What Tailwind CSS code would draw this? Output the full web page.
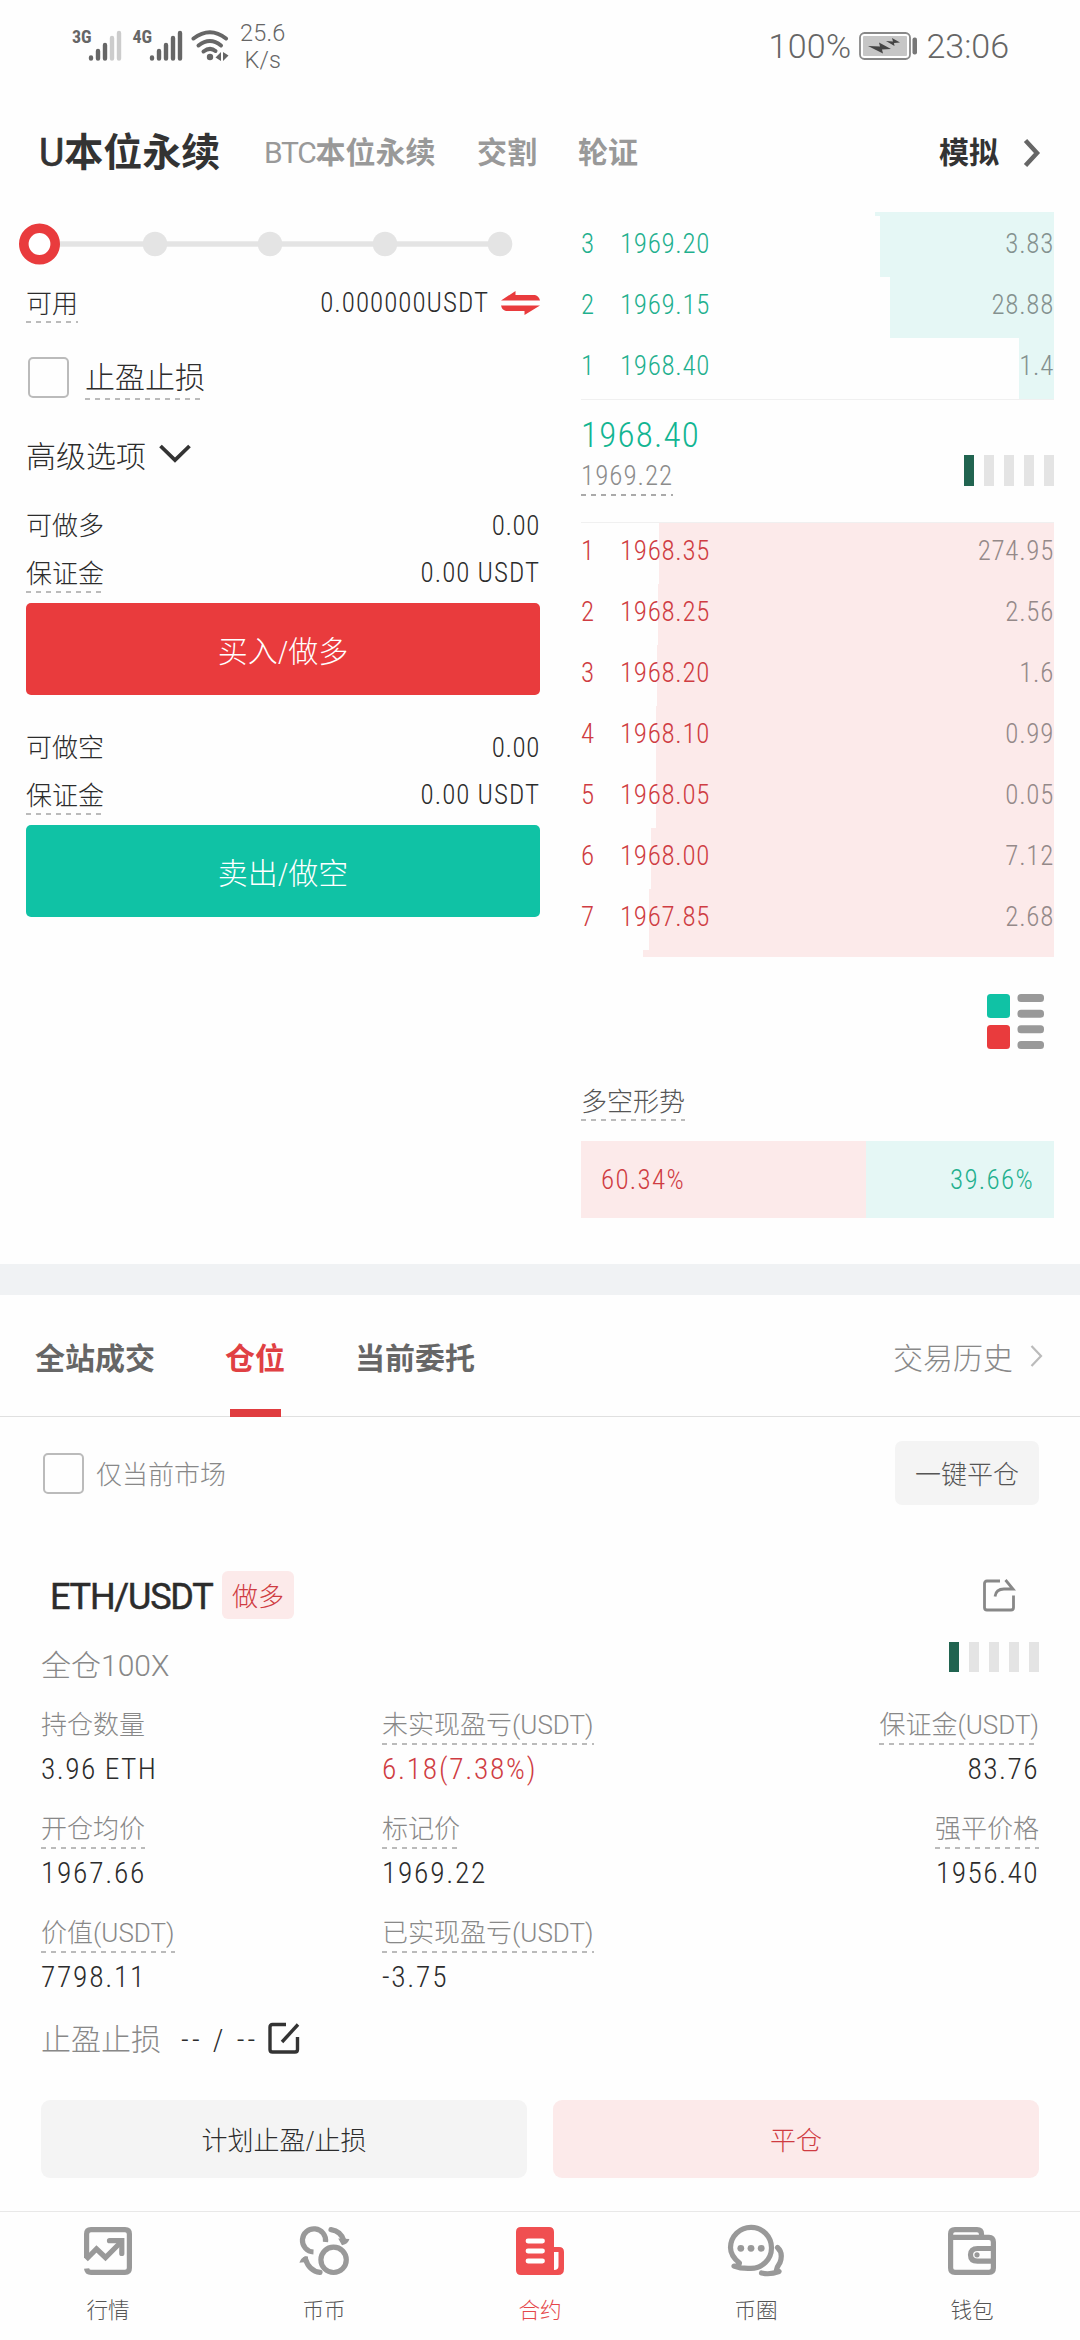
<!DOCTYPE html>
<html lang="zh-CN">
<head>
<meta charset="utf-8">
<title>合约</title>
<script src="https://cdn.jsdelivr.net/npm/@tailwindcss/browser@4"></script>
</head>
<body class="bg-white">
<div class="w-[1080px] h-[2340px] overflow-hidden flex flex-col bg-[#fefefe] text-[#2c2c2c] font-light whitespace-nowrap font-['Roboto_Condensed','Roboto','Noto_Sans_CJK_SC',sans-serif]">

  <!-- status bar -->
  <header class="h-[92px] shrink-0 flex items-center justify-between pl-[72px] pr-[71px] text-[#666] font-['Roboto',sans-serif]">
    <div class="flex items-center">
      <svg class="w-[160px] h-[40px]" viewBox="0 0 160 40">
        <g fill="#666" font-family="Roboto Condensed" font-weight="700" font-size="18"><text x="0" y="17">3G</text><text x="60.500" y="17">4G</text></g>
        <g stroke="#666" stroke-width="4.400" stroke-linecap="round">
          <path d="M19 31.500v1M26 25v7.500M33 19v13.500"/><path d="M40 12v20.500M47 7v25.500" stroke="#ccc"/>
          <path d="M80 31.500v1M87 25v7.500M94 19v13.500M101 12v20.500M108 7v25.500"/>
        </g>
        <g fill="none" stroke="#666" stroke-width="4" stroke-linecap="round"><path d="M121.500 12.500Q138 0 154 12.500"/><path d="M126.500 19.500Q138 10.500 149 19.500"/><path d="M131.500 25.500Q138 20.500 143.500 25"/></g>
        <circle cx="138" cy="31" r="3.200" fill="#666"/>
        <path d="M149 26v9l-5.500-3.500zM151 26v9l5.500-5.500z" fill="#666"/>
      </svg>
      <div class="ml-[8px] mt-px text-[23.5px] leading-[27px] text-center tracking-[0.2px]"><div>25.6</div><div>K/s</div></div>
    </div>
    <div class="flex items-center text-[34px] leading-10 font-[350]">
      <span class="tracking-[0.3px]">100%</span>
      <svg class="ml-[8px] mr-[7px] w-[60px] h-[28px]" viewBox="0 0 60 28">
        <rect x="1" y="1" width="50" height="26" rx="4.500" fill="#fff" stroke="#888" stroke-width="1.800"/>
        <rect x="4" y="4" width="44" height="20" rx="1" fill="#c6c6c6"/>
        <path d="M9 14l12 .500-1-4 12 6.500-9 .500 1 4z" fill="#444"/><path d="M27 9l7 .500-1-3.500 8 4.500-6 .500 .500 3z" fill="#444"/>
        <rect x="53.500" y="5.500" width="4.500" height="17" rx="2" fill="#777"/>
      </svg>
      <span>23:06</span>
    </div>
  </header>

  <!-- market tabs -->
  <nav class="h-[120px] shrink-0 flex items-center pt-[2px] pl-[39px] pr-[39px] text-[30px] leading-10 text-[#999] font-bold">
    <span class="text-[39px] text-[#333] w-[225px]"><span class="font-['Roboto'] font-normal [-webkit-text-stroke:0.7px_#333]">U</span>本位永续</span>
    <span class="w-[213px]"><span class="font-['Roboto'] font-normal tracking-[-1.3px]">BTC</span>本位永续</span>
    <span class="w-[101px]">交割</span>
    <span>轮证</span>
    <span class="ml-auto text-[#333]">模拟</span>
    <svg class="ml-[24px] w-[18px] h-[30px]" viewBox="0 0 18 30"><path d="M2.500 2.500L14 15 2.500 27.500" fill="none" stroke="#666" stroke-width="4.500"/></svg>
  </nav>

  <!-- order form and order book -->
  <main class="h-[1052px] shrink-0 flex justify-between pr-[26px]">
    <section class="w-[540px] pl-[26px] text-[26px]">
      <div class="h-[64px] -ml-[26px]">
        <svg class="w-[540px] h-[64px]" viewBox="0 0 540 64">
          <path d="M40 32H500" stroke="#e4e4e4" stroke-width="5.500"/>
          <g fill="#e4e4e4"><circle cx="155" cy="32" r="12.300"/><circle cx="270" cy="32" r="12.300"/><circle cx="385" cy="32" r="12.300"/><circle cx="500" cy="32" r="12.300"/></g>
          <circle cx="39.500" cy="32" r="15.700" fill="#fff" stroke="#e93b3d" stroke-width="9.600"/>
        </svg>
      </div>
      <div class="h-[54px] flex items-center justify-between">
        <span class="h-10 leading-[42px] bg-[linear-gradient(to_right,#bbb_50%,transparent_50%)] bg-[length:10px_2px] bg-repeat-x bg-[position:0_100%]">可用</span>
        <span class="flex items-center text-[27px]"><span class="tracking-[1px]">0.000000USDT</span>
          <svg class="ml-[12px] w-[39px] h-[24px]" viewBox="0 0 39 24" fill="#e93b3d"><path d="M0 9.500L14.500 0v4H34q4 1 5 5.500z"/><path d="M39 14.500L23.500 24v-4H5q-4-1-5-5.500z"/></svg>
        </span>
      </div>
      <div class="h-[94px] flex items-center pl-[2px]">
        <span class="size-[41px] rounded-[5px] border-[2.500px] border-[#bbb]"></span>
        <span class="ml-[16px] text-[30px] h-[46px] leading-[48px] bg-[linear-gradient(to_right,#bbb_50%,transparent_50%)] bg-[length:10px_2px] bg-repeat-x bg-[position:0_100%]">止盈止损</span>
      </div>
      <div class="h-[62px] pt-[2px] flex items-center text-[30px]">高级选项
        <svg class="ml-[13px] -mt-[6px] w-[32px] h-[19px]" viewBox="0 0 32 19"><path d="M1.500 2L16 16 30.500 2" fill="none" stroke="#333" stroke-width="3.800"/></svg>
      </div>
      <div class="mt-3 h-[54px] pt-[2px] flex items-center justify-between"><span>可做多</span><span class="text-[27px] tracking-[0.6px]">0.00</span></div>
      <div class="h-[42px] flex items-center justify-between"><span class="h-10 leading-[42px] bg-[linear-gradient(to_right,#bbb_50%,transparent_50%)] bg-[length:10px_2px] bg-repeat-x bg-[position:0_100%]">保证金</span><span class="text-[27px] tracking-[1px] leading-[42px]">0.00 USDT</span></div>
      <button class="mt-[9px] w-full h-[92px] rounded-[5px] bg-[#e93b3d] text-white text-[30px] pt-[5px]">买入/做多</button>
      <div class="mt-[25px] h-[54px] pt-[2px] flex items-center justify-between"><span>可做空</span><span class="text-[27px] tracking-[0.6px]">0.00</span></div>
      <div class="h-[42px] flex items-center justify-between"><span class="h-10 leading-[42px] bg-[linear-gradient(to_right,#bbb_50%,transparent_50%)] bg-[length:10px_2px] bg-repeat-x bg-[position:0_100%]">保证金</span><span class="text-[27px] tracking-[1px] leading-[42px]">0.00 USDT</span></div>
      <button class="mt-[9px] w-full h-[92px] rounded-[5px] bg-[#10c2a5] text-white text-[30px] pt-[5px]">卖出/做空</button>
    </section>

    <section class="w-[473px] text-[27px] tracking-[0.7px]">
      <div class="text-[#1fb08e]">
        <div class="h-[4px] ml-auto bg-[#e5f7f5]" style="width:179px"></div>
        <div class="h-[61px] pb-[4px] flex items-center bg-no-repeat bg-right bg-[linear-gradient(#e5f7f5,#e5f7f5)]" style="background-size:174px 100%"><span class="w-[39px]">3</span><span>1969.20</span><span class="ml-auto text-[#84918f]">3.83</span></div>
        <div class="h-[61px] pb-[4px] flex items-center bg-no-repeat bg-right bg-[linear-gradient(#e5f7f5,#e5f7f5)]" style="background-size:164px 100%"><span class="w-[39px]">2</span><span>1969.15</span><span class="ml-auto text-[#84918f]">28.88</span></div>
        <div class="h-[61px] pb-[4px] flex items-center bg-no-repeat bg-right bg-[linear-gradient(#e5f7f5,#e5f7f5)]" style="background-size:35px 100%"><span class="w-[39px]">1</span><span>1968.40</span><span class="ml-auto text-[#84918f]">1.4</span></div>
      </div>
      <div class="h-[124px] border-y border-[#f0f0f0] flex justify-between">
        <div class="pt-[12px] flex flex-col items-start">
          <div class="h-[44px] leading-[47px] text-[35px] tracking-[1.2px] text-[#12b592]">1968.40</div>
          <div class="h-10 leading-[41px] tracking-[1px] text-[#8c8c8c] bg-[linear-gradient(to_right,#aaa_50%,transparent_50%)] bg-[length:10px_2px] bg-repeat-x bg-[position:0_100%]">1969.22</div>
        </div>
        <div class="mt-[55px] h-[31px] flex gap-[10px]"><i class="w-[10px] bg-[#216450]"></i><i class="w-[10px] bg-[#e4e4e4]"></i><i class="w-[10px] bg-[#e4e4e4]"></i><i class="w-[10px] bg-[#e4e4e4]"></i><i class="w-[10px] bg-[#e4e4e4]"></i></div>
      </div>
      <div class="text-[#cf3c42]">
        <div class="h-[61px] pb-[4px] flex items-center bg-no-repeat bg-right bg-[linear-gradient(#fceaea,#fceaea)]" style="background-size:395px 100%"><span class="w-[39px]">1</span><span>1968.35</span><span class="ml-auto text-[#948989]">274.95</span></div>
        <div class="h-[61px] pb-[4px] flex items-center bg-no-repeat bg-right bg-[linear-gradient(#fceaea,#fceaea)]" style="background-size:396px 100%"><span class="w-[39px]">2</span><span>1968.25</span><span class="ml-auto text-[#948989]">2.56</span></div>
        <div class="h-[61px] pb-[4px] flex items-center bg-no-repeat bg-right bg-[linear-gradient(#fceaea,#fceaea)]" style="background-size:397px 100%"><span class="w-[39px]">3</span><span>1968.20</span><span class="ml-auto text-[#948989]">1.6</span></div>
        <div class="h-[61px] pb-[4px] flex items-center bg-no-repeat bg-right bg-[linear-gradient(#fceaea,#fceaea)]" style="background-size:398px 100%"><span class="w-[39px]">4</span><span>1968.10</span><span class="ml-auto text-[#948989]">0.99</span></div>
        <div class="h-[61px] pb-[4px] flex items-center bg-no-repeat bg-right bg-[linear-gradient(#fceaea,#fceaea)]" style="background-size:398px 100%"><span class="w-[39px]">5</span><span>1968.05</span><span class="ml-auto text-[#948989]">0.05</span></div>
        <div class="h-[61px] pb-[4px] flex items-center bg-no-repeat bg-right bg-[linear-gradient(#fceaea,#fceaea)]" style="background-size:403px 100%"><span class="w-[39px]">6</span><span>1968.00</span><span class="ml-auto text-[#948989]">7.12</span></div>
        <div class="h-[61px] pb-[4px] flex items-center bg-no-repeat bg-right bg-[linear-gradient(#fceaea,#fceaea)]" style="background-size:405px 100%"><span class="w-[39px]">7</span><span>1967.85</span><span class="ml-auto text-[#948989]">2.68</span></div>
        <div class="h-[7px] ml-auto bg-[#fceaea]" style="width:411px"></div>
      </div>
      <svg class="mt-[37px] ml-auto mr-[10px] w-[57px] h-[55px]" viewBox="0 0 57 55">
        <rect width="23" height="24" rx="3.500" fill="#10c2a5"/><rect y="31" width="23" height="24" rx="3.500" fill="#e93b3d"/>
        <g fill="#999"><rect x="30.500" width="26.500" height="8" rx="3.500"/><rect x="30.500" y="15.700" width="26.500" height="8" rx="3.500"/><rect x="30.500" y="31.300" width="26.500" height="8" rx="3.500"/><rect x="30.500" y="47" width="26.500" height="8" rx="3.500"/></g>
      </svg>
      <div class="mt-[32px] flex"><span class="h-10 leading-[42px] text-[26px] tracking-normal text-[#555] bg-[linear-gradient(to_right,#bbb_50%,transparent_50%)] bg-[length:10px_2px] bg-repeat-x bg-[position:0_100%]">多空形势</span></div>
      <div class="mt-[20px] h-[77px] flex items-stretch tracking-[1.3px]">
        <div class="flex items-center pt-[2px] pl-[20px] bg-[#fceaea] text-[#cf3c42]" style="width:60.34%">60.34%</div>
        <div class="flex-1 flex items-center justify-end pt-[2px] pr-[20px] bg-[#e5f7f5] text-[#1fb08e]">39.66%</div>
      </div>
    </section>
  </main>

  <div class="h-[31px] shrink-0 bg-[#f0f2f4]"></div>

  <!-- positions -->
  <nav class="h-[122px] shrink-0 border-b border-[#e0e0e0] flex items-center pl-[35px] pr-[37px] pt-[7px] text-[30px] leading-[44px] text-[#666] font-bold">
    <span class="w-[190px]">全站成交</span>
    <span class="relative w-[130px] text-[#e04043]">仓位<i class="absolute left-[5px] top-[72px] w-[51px] h-[8px] bg-[#e03c3f]"></i></span>
    <span>当前委托</span>
    <span class="ml-auto font-light text-[#888]">交易历史</span>
    <svg class="ml-[17px] -mt-[7px] w-[13px] h-[22px]" viewBox="0 0 13 22"><path d="M1.500 1L11 11 1.500 21" fill="none" stroke="#bbb" stroke-width="2.200"/></svg>
  </nav>
  <section class="px-[41px] text-[26px] flex flex-col">
    <div class="h-[112px] flex items-center pl-[2px]">
      <span class="size-[41px] rounded-[5px] border-[2.500px] border-[#bbb]"></span>
      <span class="ml-[12px] mt-[5px] text-[#888]">仅当前市场</span>
      <button class="ml-auto w-[144px] h-[64px] rounded-[7px] bg-[#f4f4f4] text-[#555] pt-[5px]">一键平仓</button>
    </div>
    <div class="mt-[38px] h-[56px] flex items-center pl-[9px]">
      <span class="pt-[3px] font-['Roboto'] text-[36px] font-normal [-webkit-text-stroke:0.5px_#2c2c2c] tracking-[-1.2px] w-[172px]">ETH/USDT</span>
      <span class="w-[72px] h-[48px] leading-[52px] rounded-[6px] bg-[#fceaea] text-[#cf3c42] text-center">做多</span>
      <svg class="ml-auto mr-[23px] w-[34px] h-[34px]" viewBox="0 0 34 34" fill="none" stroke="#888" stroke-width="2.800"><path d="M18 3H5Q2.500 3 2.500 5.500V29.500Q2.500 32 5 32H29Q31.500 32 31.500 29.500V17.500"/><path d="M13 18.500Q14 11 22 11H31L23.500 2"/></svg>
    </div>
    <div class="mt-px h-[66px] flex items-center justify-between">
      <span class="pt-[16px] text-[30px] text-[#888]">全仓<span class="font-['Roboto']">100X</span></span>
      <div class="h-[30px] flex gap-[10px]"><i class="w-[10px] bg-[#216450]"></i><i class="w-[10px] bg-[#e4e4e4]"></i><i class="w-[10px] bg-[#e4e4e4]"></i><i class="w-[10px] bg-[#e4e4e4]"></i><i class="w-[10px] bg-[#e4e4e4]"></i></div>
    </div>
    <dl class="mt-[15px] grid grid-cols-[341px_1fr_auto] gap-y-[16px]">
      <div><dt class="w-fit h-10 leading-[41px] text-[#888]">持仓数量</dt><dd class="leading-[48px] text-[29.5px] tracking-[1.4px]">3.96 ETH</dd></div>
      <div><dt class="w-fit h-10 leading-[41px] text-[#888] bg-[linear-gradient(to_right,#bbb_50%,transparent_50%)] bg-[length:10px_2px] bg-repeat-x bg-[position:0_100%]">未实现盈亏<span class="font-['Roboto']">(USDT)</span></dt><dd class="leading-[48px] text-[29.5px] tracking-[1.7px] text-[#cf3c42]">6.18(7.38%)</dd></div>
      <div class="flex flex-col items-end"><dt class="w-fit h-10 leading-[41px] text-[#888] bg-[linear-gradient(to_right,#bbb_50%,transparent_50%)] bg-[length:10px_2px] bg-repeat-x bg-[position:0_100%]">保证金<span class="font-['Roboto']">(USDT)</span></dt><dd class="leading-[48px] text-[29.5px] tracking-[1.4px]">83.76</dd></div>
      <div><dt class="w-fit h-10 leading-[41px] text-[#888] bg-[linear-gradient(to_right,#bbb_50%,transparent_50%)] bg-[length:10px_2px] bg-repeat-x bg-[position:0_100%]">开仓均价</dt><dd class="leading-[48px] text-[29.5px] tracking-[1.7px]">1967.66</dd></div>
      <div><dt class="w-fit h-10 leading-[41px] text-[#888] bg-[linear-gradient(to_right,#bbb_50%,transparent_50%)] bg-[length:10px_2px] bg-repeat-x bg-[position:0_100%]">标记价</dt><dd class="leading-[48px] text-[29.5px] tracking-[1.7px]">1969.22</dd></div>
      <div class="flex flex-col items-end"><dt class="w-fit h-10 leading-[41px] text-[#888] bg-[linear-gradient(to_right,#bbb_50%,transparent_50%)] bg-[length:10px_2px] bg-repeat-x bg-[position:0_100%]">强平价格</dt><dd class="leading-[48px] text-[29.5px] tracking-[1.4px]">1956.40</dd></div>
      <div><dt class="w-fit h-10 leading-[41px] text-[#888] bg-[linear-gradient(to_right,#bbb_50%,transparent_50%)] bg-[length:10px_2px] bg-repeat-x bg-[position:0_100%]">价值<span class="font-['Roboto']">(USDT)</span></dt><dd class="leading-[48px] text-[29.5px] tracking-[1.7px]">7798.11</dd></div>
      <div><dt class="w-fit h-10 leading-[41px] text-[#888] bg-[linear-gradient(to_right,#bbb_50%,transparent_50%)] bg-[length:10px_2px] bg-repeat-x bg-[position:0_100%]">已实现盈亏<span class="font-['Roboto']">(USDT)</span></dt><dd class="leading-[48px] text-[29.5px] tracking-[1.7px]">-3.75</dd></div>
    </dl>
    <div class="h-[76px] pt-px flex items-center text-[30px]">
      <span class="w-[140px] text-[#888]">止盈止损</span>
      <span class="w-[87px] tracking-[3.200px]">-- / --</span>
      <svg class="-mt-[3px] w-[32px] h-[32px]" viewBox="0 0 32 32" fill="none" stroke="#333" stroke-width="3.400"><path d="M18 2.500H4.500Q2 2.500 2 5V27.500Q2 30 4.500 30H27Q29.500 30 29.500 27.500V15"/><path d="M14 20L30 2.500"/></svg>
    </div>
    <div class="mt-[23px] grid grid-cols-2 gap-[26px]">
      <button class="h-[78px] rounded-[9px] bg-[#f4f4f4] pt-[5px]">计划止盈/止损</button>
      <button class="h-[78px] rounded-[9px] bg-[#fceaea] text-[#cf3c42] pt-[5px]">平仓</button>
    </div>
  </section>

  <!-- bottom navigation -->
  <nav class="mt-auto h-[129px] shrink-0 border-t border-[#e8e8e8] grid grid-cols-5 text-[21.6px] text-[#555]">
    <a class="pt-[12px] flex flex-col items-center gap-[17px]">
      <svg class="w-[58px] h-[54px]" viewBox="-5 -3 58 54" fill="none" stroke="#999" stroke-width="5.200"><path d="M2.600 31V7Q2.600 2.600 7 2.600H41Q45.400 2.600 45.400 7V41Q45.400 45.400 41 45.400H7Q3 45.400 2.600 41.500"/><path d="M2 32.500L12.500 22 21.500 30.500 36.500 15.500"/><path d="M25.500 13.700H37.800V26.500" stroke-linecap="round"/></svg>
      <span class="leading-8">行情</span></a>
    <a class="pt-[12px] flex flex-col items-center gap-[17px]">
      <svg class="w-[58px] h-[54px]" viewBox="-4 -3 58 54" fill="none" stroke="#999" stroke-width="5.200"><path d="M26.500 15A11.600 11.600 0 1 0 14.500 25"/><circle cx="34.600" cy="32.800" r="12.700"/><path d="M32 2.600Q42 4 45 14M21 45.400Q10 44 6.500 32" stroke-linecap="round"/><path d="M41 12.500L49 13Q48 16 43.500 17zM2 34.500L8 34 8 30.500Q4 30 2 34.500z" fill="#999" stroke-width="2"/></svg>
      <span class="leading-8">币币</span></a>
    <a class="pt-[12px] flex flex-col items-center gap-[17px] text-[#e5484b]">
      <svg class="w-[58px] h-[54px]" viewBox="-5 -3 58 54" fill="#f04f51"><path fill-rule="evenodd" d="M5 0H33Q38 0 38 5V20H43Q48 20 48 25V42Q48 48 42 48H5Q0 48 0 43V5Q0 0 5 0zM38 25V43Q42.500 43 42.500 39V25z"/><path d="M12 14H26.500M12 24H26.500M12 34H26.500" stroke="#fff" stroke-width="4.800" stroke-linecap="round"/></svg>
      <span class="leading-8">合约</span></a>
    <a class="pt-[12px] flex flex-col items-center gap-[17px]">
      <svg class="w-[58px] h-[54px]" viewBox="727 2224 58 54" fill="none" stroke="#999" stroke-width="5.200" stroke-linecap="round" stroke-linejoin="round"><path d="M739.500 2263Q730.500 2256 730.500 2247.500A20.500 20.500 0 1 1 751 2268.300Q741 2268.800 734 2266Q739 2266.500 739.500 2263z"/><path d="M777.500 2247.500Q783.500 2253 780 2262.500Q777 2267 776.500 2270L779 2271.500Q770 2275 761.500 2273"/><g fill="#999" stroke="none"><circle cx="740.800" cy="2248.300" r="3.400"/><circle cx="751" cy="2248.300" r="3.400"/><circle cx="761.200" cy="2248.300" r="3.400"/></g></svg>
      <span class="leading-8">币圈</span></a>
    <a class="pt-[12px] flex flex-col items-center gap-[17px]">
      <svg class="w-[58px] h-[54px]" viewBox="-5 -3 58 54" fill="none" stroke="#999" stroke-width="5.200"><path d="M2.600 10V7Q2.600 2.600 7 2.600H29Q33.500 2.600 33.500 7V10"/><path d="M2.600 8V41Q2.600 45.400 7 45.400H41Q45.400 45.400 45.400 41V15Q45.400 10.400 41 10.400H2.600"/><path d="M45 21.500H29.500Q22.500 21.500 22.500 27.800Q22.500 34.200 29.500 34.200H45"/><circle cx="29" cy="27.800" r="2.600" fill="#999" stroke="none"/></svg>
      <span class="leading-8">钱包</span></a>
  </nav>
</div>
</body>
</html>
